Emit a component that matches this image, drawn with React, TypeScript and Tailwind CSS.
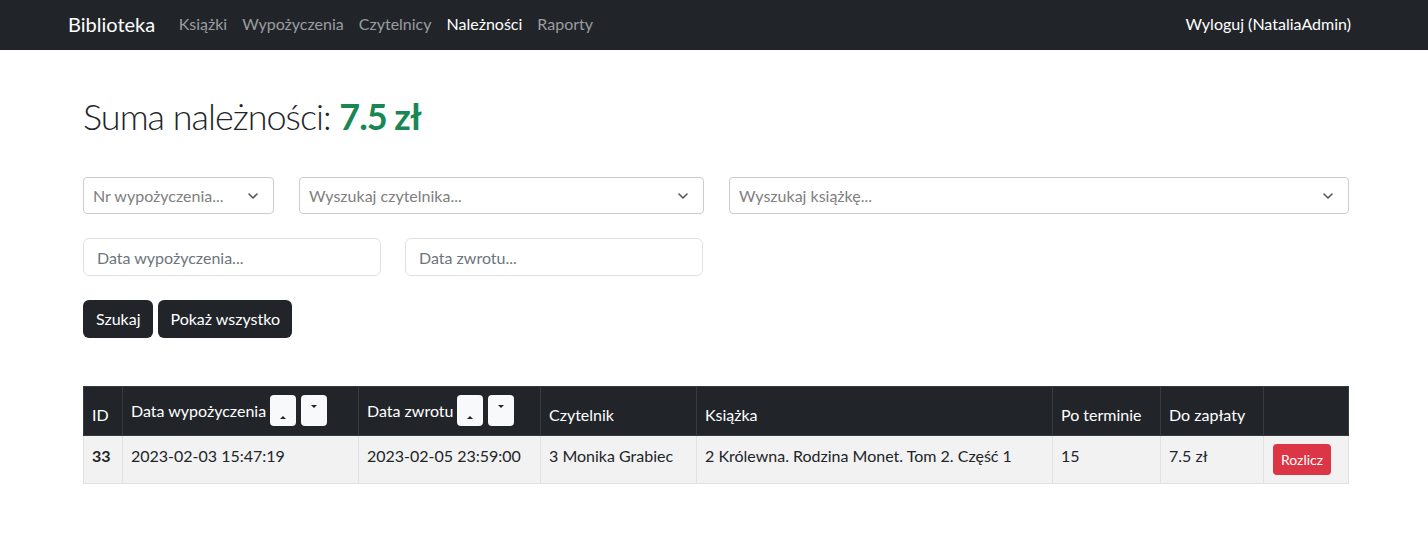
import React from "react";

const font = "font-['Lato','Liberation_Sans',sans-serif]";

function Chevron() {
	return (
		<svg width="12" height="8" viewBox="0 0 12 8" fill="none" className="stroke-[#555]">
			<path d="M2 2l4 4 4-4" strokeWidth="1.6" strokeLinecap="round" strokeLinejoin="round" />
		</svg>
	);
}

function SelectBox({ placeholder, w }: { placeholder: string; w: string }) {
	return (
		<div
			className={`${w} h-[37px] flex items-center justify-between border border-[#cccccc] rounded-[4px] bg-white`}
		>
			<span className="pl-[9px] text-[16px] text-[#808080]">{placeholder}</span>
			<span className="pl-2 pr-[14px] flex items-center">
				<Chevron />
			</span>
		</div>
	);
}

function DateInput({ placeholder }: { placeholder: string }) {
	return (
		<input
			placeholder={placeholder}
			className={`${font} w-[298px] h-[38px] px-[13px] border border-[#dee2e6] rounded-[6px] text-[16px] placeholder:text-[#6c757d] outline-none`}
		/>
	);
}

function SortButtons() {
	return (
		<span className="inline-flex gap-[5px] ml-[4px]">
			<span className="w-[26px] h-[31px] bg-[#f8f9fa] rounded-[4px] flex items-end justify-center pb-[7px]">
				<span className="w-0 h-0 border-l-[3px] border-r-[3px] border-b-[3px] border-l-transparent border-r-transparent border-b-[#212529]" />
			</span>
			<span className="w-[26px] h-[31px] bg-[#f8f9fa] rounded-[4px] flex items-start justify-center pt-[10px]">
				<span className="w-0 h-0 border-l-[3px] border-r-[3px] border-t-[3px] border-l-transparent border-r-transparent border-t-[#212529]" />
			</span>
		</span>
	);
}

export default function App() {
	const links = ["Książki", "Wypożyczenia", "Czytelnicy", "Należności", "Raporty"];
	return (
		<div className={`${font} min-h-[560px] bg-white text-[#212529] text-[16px]`}>
			<nav className="h-[50px] pb-[3px] bg-[#212529] flex items-center justify-between pl-[68px] pr-[77px]">
				<div className="flex items-center">
					<span className="text-[20px] text-white mr-[16px]">Biblioteka</span>
					{links.map((l) => (
						<span
							key={l}
							className={`px-[7.5px] ${l === "Należności" ? "text-white" : "text-[#9a9da0]"}`}
						>
							{l}
						</span>
					))}
				</div>
				<span className="text-white">Wyloguj (NataliaAdmin)</span>
			</nav>

			<main className="pl-[83px] pr-[79px] pt-[42px]">
				<h1 className="text-[36px] font-light leading-[48px] tracking-[-1px]">
					Suma należności: <span className="font-bold text-[#198754]">7.5 zł</span>
				</h1>

				<div className="flex gap-[25px] mt-[37px]">
					<SelectBox placeholder="Nr wypożyczenia..." w="w-[191px]" />
					<SelectBox placeholder="Wyszukaj czytelnika..." w="w-[405px]" />
					<SelectBox placeholder="Wyszukaj książkę..." w="flex-1" />
				</div>

				<div className="flex gap-[24px] mt-[24px]">
					<DateInput placeholder="Data wypożyczenia..." />
					<DateInput placeholder="Data zwrotu..." />
				</div>

				<div className="flex gap-[5px] mt-[24px]">
					<button className="h-[38px] px-[13px] bg-[#212529] text-white rounded-[6px]">Szukaj</button>
					<button className="h-[38px] px-[12px] bg-[#212529] text-white rounded-[6px]">Pokaż wszystko</button>
				</div>

				<table className="w-full table-fixed border-collapse mt-[48px]">
					<colgroup>
						<col className="w-[39px]" />
						<col className="w-[236px]" />
						<col className="w-[182px]" />
						<col className="w-[156px]" />
						<col className="w-[356px]" />
						<col className="w-[108px]" />
						<col className="w-[103px]" />
						<col />
					</colgroup>
					<thead>
						<tr className="bg-[#212529] text-white h-[49px] align-bottom text-left">
							<th className="p-2 font-normal border border-[#373b3e]">ID</th>
							<th className="p-2 pb-[9px] font-normal border border-[#373b3e] whitespace-nowrap">
								<span className="flex items-center">
									Data wypożyczenia
									<SortButtons />
								</span>
							</th>
							<th className="p-2 pb-[9px] font-normal border border-[#373b3e] whitespace-nowrap">
								<span className="flex items-center">
									Data zwrotu
									<SortButtons />
								</span>
							</th>
							<th className="p-2 font-normal border border-[#373b3e]">Czytelnik</th>
							<th className="p-2 font-normal border border-[#373b3e]">Książka</th>
							<th className="p-2 font-normal border border-[#373b3e]">Po terminie</th>
							<th className="p-2 font-normal border border-[#373b3e]">Do zapłaty</th>
							<th className="p-2 font-normal border border-[#373b3e]"></th>
						</tr>
					</thead>
					<tbody>
						<tr className="bg-[#f2f2f2] align-top h-[47px]">
							<td className="p-2 font-bold border border-[#dee2e6]">33</td>
							<td className="p-2 border border-[#dee2e6]">2023-02-03 15:47:19</td>
							<td className="p-2 border border-[#dee2e6]">2023-02-05 23:59:00</td>
							<td className="p-2 border border-[#dee2e6]">3 Monika Grabiec</td>
							<td className="p-2 border border-[#dee2e6]">2 Królewna. Rodzina Monet. Tom 2. Część 1</td>
							<td className="p-2 border border-[#dee2e6]">15</td>
							<td className="p-2 border border-[#dee2e6]">7.5 zł</td>
							<td className="p-2 border border-[#dee2e6]">
								<button className="h-[31px] px-[8px] ml-[1px] bg-[#dc3545] text-white text-[14px] rounded-[4px]">
									Rozlicz
								</button>
							</td>
						</tr>
					</tbody>
				</table>
			</main>
		</div>
	);
}
